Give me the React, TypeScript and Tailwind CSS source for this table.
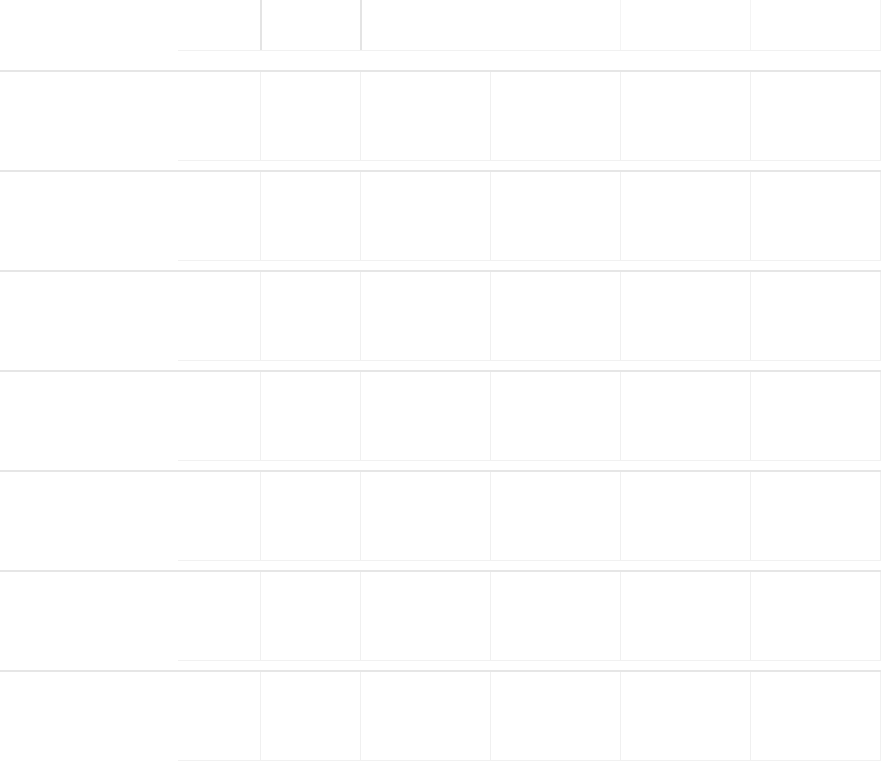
const rows = [0, 1, 2, 3, 4, 5, 6];

function HeaderCells() {
  return (
    <div className="flex h-[51px] flex-1 border-b border-[#f1f1f1]">
      <div className="w-[82px] shrink-0" />
      <div className="w-[100px] shrink-0 border-l-2 border-[#e4e4e4]" />
      <div className="w-[130px] shrink-0 border-l-2 border-[#e4e4e4]" />
      <div className="w-[130px] shrink-0" />
      <div className="w-[130px] shrink-0 border-l border-[#f4f4f4]" />
      <div className="w-[131px] shrink-0 border-x border-[#f4f4f4]" />
    </div>
  );
}

function RowCells() {
  return (
    <div className="flex h-[89px] flex-1 border-b border-[#f1f1f1]">
      <div className="w-[82px] shrink-0" />
      <div className="w-[100px] shrink-0 border-l border-[#f0f0f0]" />
      <div className="w-[130px] shrink-0 border-l border-[#f0f0f0]" />
      <div className="w-[130px] shrink-0 border-l border-[#f0f0f0]" />
      <div className="w-[130px] shrink-0 border-l border-[#f0f0f0]" />
      <div className="w-[131px] shrink-0 border-x border-[#f0f0f0]" />
    </div>
  );
}

export default function App() {
  return (
    <div className="h-[767px] w-[881px] overflow-hidden bg-white font-['Liberation_Sans',sans-serif]">
      <div className="flex h-[72px] items-start border-b-2 border-[#e6e6e6]">
        <div className="w-[178px] shrink-0" />
        <HeaderCells />
      </div>
      {rows.map((r) => (
        <div key={r} className="flex h-[100px] items-start border-b-2 border-[#e6e6e6]">
          <div className="w-[178px] shrink-0" />
          <RowCells />
        </div>
      ))}
    </div>
  );
}
